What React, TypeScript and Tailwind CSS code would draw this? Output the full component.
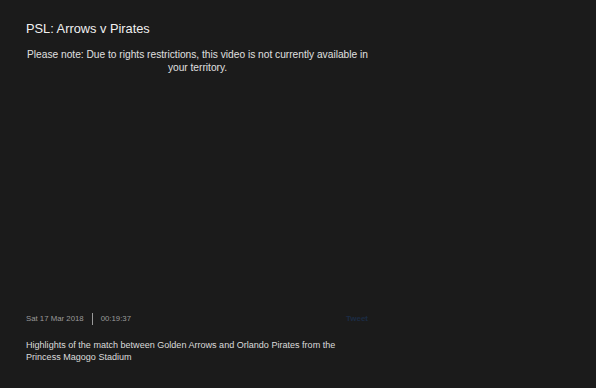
export default function App() {
  return (
    <div
      className="w-[596px] h-[388px] bg-[#1b1b1b] flex flex-col text-[#e6e6e6]"
      style={{ fontFamily: '"Liberation Sans", Arial, sans-serif' }}
    >
      <div className="pl-[26px] pt-[20px] w-[369px]">
        <h1 className="text-[12.8px] leading-[17px] text-[#f0f0f0]">PSL: Arrows v Pirates</h1>
        <p className="mt-[11px] text-[10.2px] leading-[13px] text-center text-[#e0e0e0]">
          Please note: Due to rights restrictions, this video is not currently available in your territory.
        </p>
      </div>

      <div className="mt-auto pl-[26px] pb-[25px] w-[366px]">
        <div className="flex items-center text-[7.8px] text-[#9a9a9a]">
          <span>Sat 17 Mar 2018</span>
          <span className="mx-[8px] w-px h-[12px] bg-[#9a9a9a]" />
          <span>00:19:37</span>
          <span className="ml-auto -mr-[2px] text-[8px] font-bold text-[#1c2c44]">Tweet</span>
        </div>
        <p className="mt-[14px] text-[9.05px] leading-[12px] text-[#dcdcdc]">
          Highlights of the match between Golden Arrows and Orlando Pirates from the Princess Magogo Stadium
        </p>
      </div>
    </div>
  );
}
